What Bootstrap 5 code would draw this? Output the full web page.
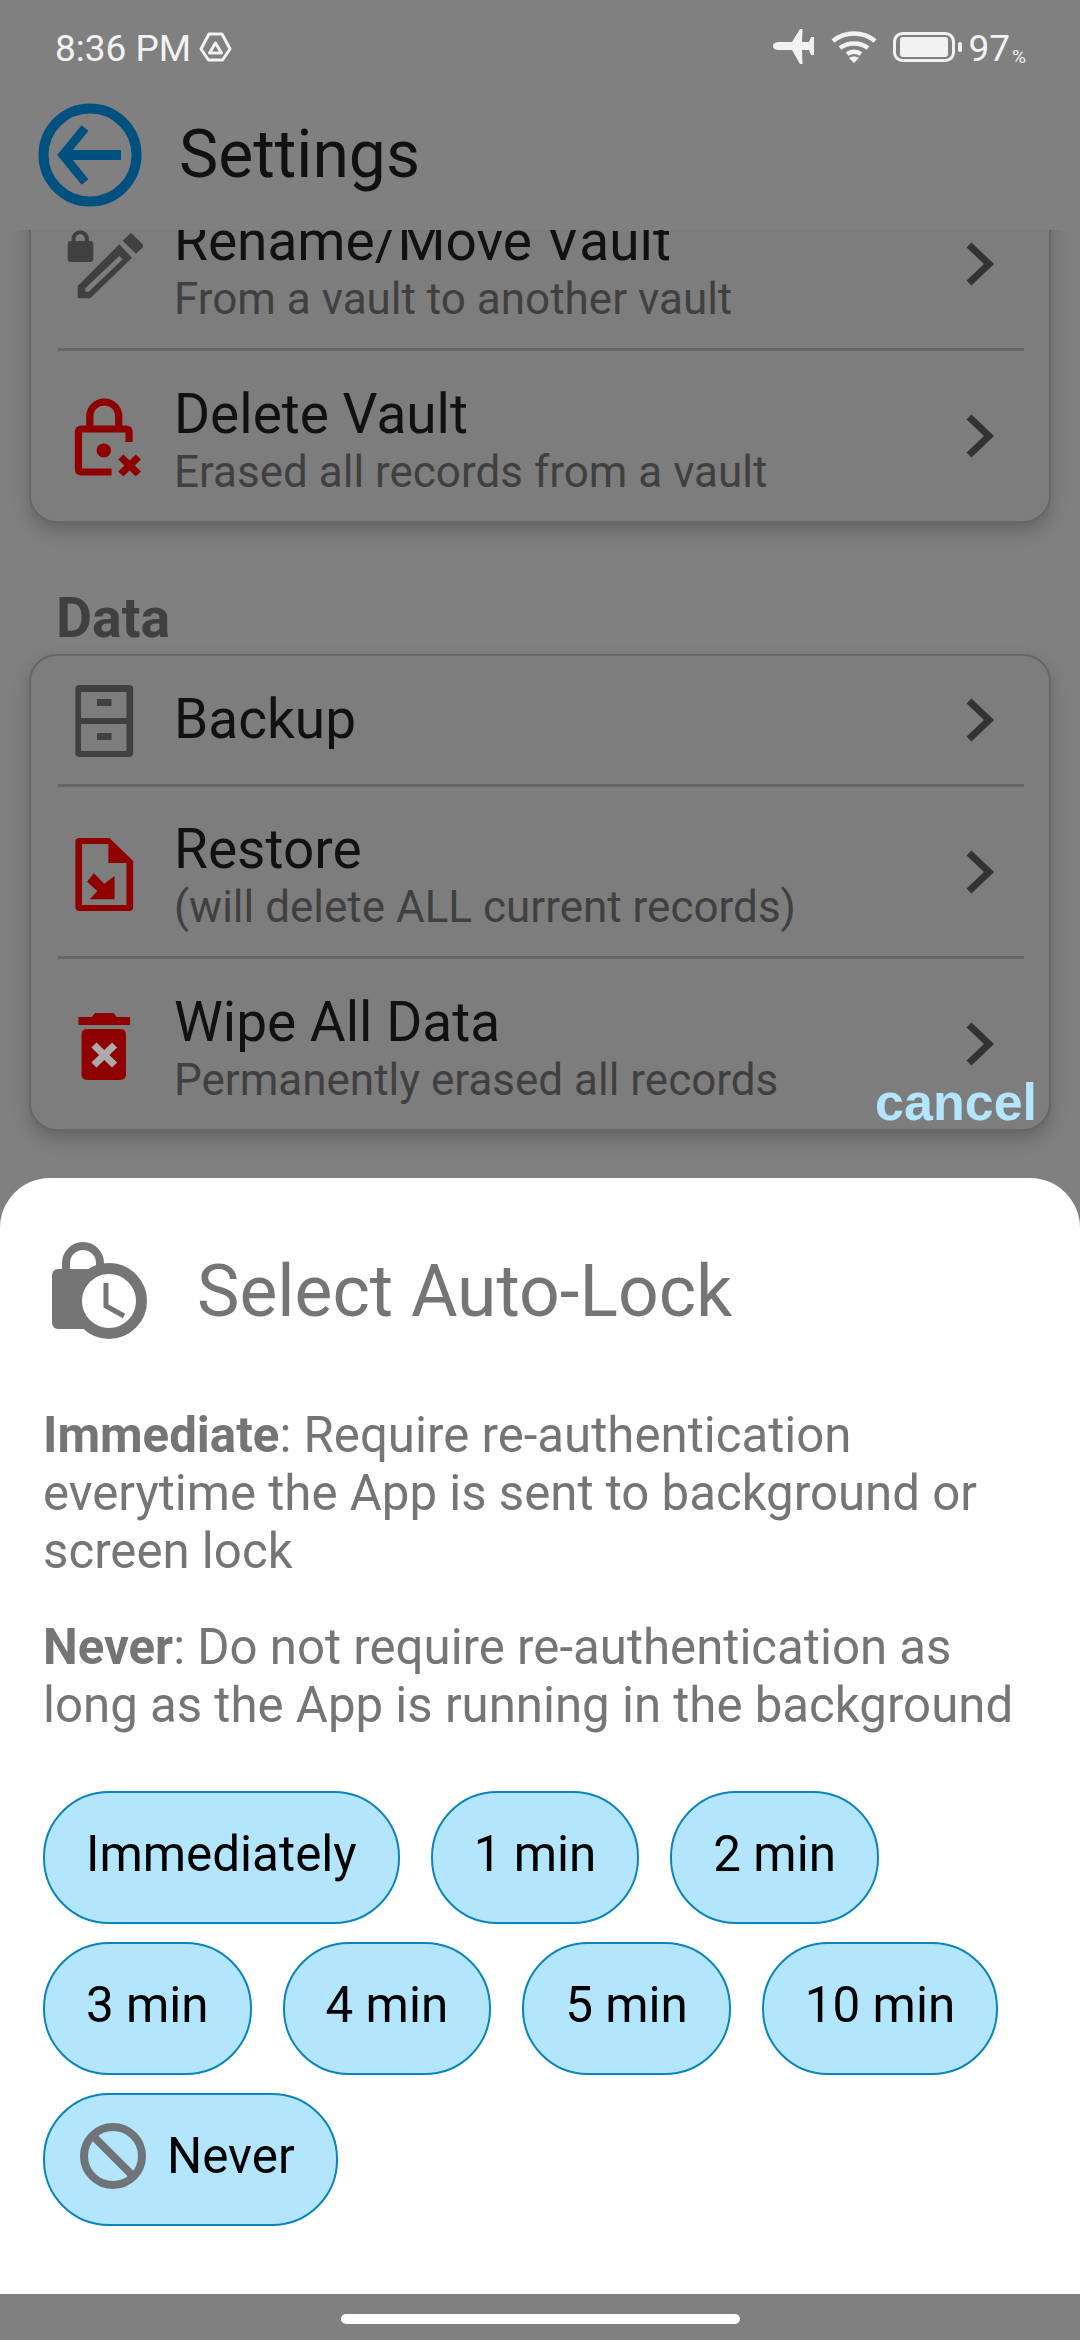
<!DOCTYPE html>
<html lang="en">
<head>
    <meta charset="UTF-8">
    <meta name="viewport" content="width=device-width, initial-scale=1">
    <title>Settings</title>
    <link href="https://cdn.jsdelivr.net/npm/bootstrap@5.3.0/dist/css/bootstrap.min.css" rel="stylesheet">
    <style>
        html, body { margin: 0; height: 2340px; overflow: hidden; }
        body { background: #808080; font-family: Roboto, "Liberation Sans", sans-serif; color: #111; }
        .app-shell { width: 1080px; height: 2340px; }
        .status-line { height: 100px; padding: 27px 54px 0 55px; color: #f2f2f2; font-size: 37px; line-height: 44px; }
        .status-line svg { display: block; margin-bottom: 4px; }
        .pct-num { margin-left: 6px; }
        .pct-sign { font-size: 19px; line-height: 18px; margin-left: 2px; align-self: flex-end; padding-bottom: 5px; }
        .top-bar { height: 130px; padding: 3px 0 24px 38px; background: #808080; position: relative; z-index: 2; }
        .top-title { font-size: 66px; line-height: 82px; margin-left: 37px; }
        .scroll-pane { flex: 1 1 0; min-height: 0; overflow: hidden; position: relative; }
        .scroll-inner { margin-top: -53px; }
        .set-card { margin: 0 29px; background: #7d7d7d; border: 2px solid #666; border-radius: 28px; box-shadow: 0 8px 18px rgba(0,0,0,.22); }
        .set-row { margin: 0 25px 0 27px; height: 172px; border-bottom: 3px solid #666; }
        .set-row.one-line { height: 131px; }
        .set-row:last-child { border-bottom: 0; height: 170px; }
        .row-icon { width: 85px; height: 100px; margin-right: 31px; flex: none; }
        .row-text { padding-top: 11px; }
        .one-line .row-text { padding: 0 0 3px; }
        .row-title { font-size: 55px; line-height: 60px; color: #111; }
        .row-sub { font-size: 44px; line-height: 56px; color: #404040; }
        .row-arrow { width: 30px; height: 44px; margin-right: 29px; flex: none; }
        .group-label { font-size: 55.5px; font-weight: 700; line-height: 60px; color: #404040; margin: 66px 0 5px 56px; }
        .cancel-link { position: absolute; right: 43px; bottom: 46px; font-family: "Liberation Sans", Arial, sans-serif; font-weight: 700; font-size: 52px; line-height: 60px; color: #b3e5fc; }
        .bottom-sheet { background: #fff; border-radius: 50px 50px 0 0; padding: 63px 43px 68px; color: #757575; }
        .sheet-title { font-size: 71.4px; line-height: 102px; margin-left: 47px; color: #757575; }
        .sheet-text { font-size: 49.2px; line-height: 58px; margin: 63px 0 38px; }
        .sheet-text + .sheet-text { margin-top: 0; margin-bottom: 57px; }
        .sheet-text b { font-weight: 700; }
        .time-list { column-gap: 31px; row-gap: 18px; }
        .time-btn { height: 133px; padding: 0 41px 8px; border: 2px solid #0a84bd; border-radius: 66px; background: #b3e5fc; color: #000; font-size: 49.4px; line-height: 58px; }
        .time-btn:hover { background: #b3e5fc; border-color: #0a84bd; color: #000; }
        .never-btn { padding-left: 34px; }
        .never-btn svg { margin-right: 20px; }
        .nav-strip { height: 46px; padding-top: 20px; }
        .home-pill { width: 399px; height: 10px; border-radius: 5px; background: #fff; }
    </style>
</head>
<body>
    <div class="app-shell d-flex flex-column">
        <!-- status bar -->
        <div class="status-line d-flex justify-content-between align-items-start flex-shrink-0">
            <div class="d-flex align-items-center">
                <span>8:36 PM</span>
                <svg class="ms-2" width="34" height="30" viewBox="0 0 34 30" fill="none" stroke="#f2f2f2" stroke-width="3" stroke-linejoin="round"><path d="M10 2h13l8 15-7.500 11h-14L2 17z"/><path d="M16.500 11l6 10h-12z"/></svg>
            </div>
            <div class="d-flex align-items-center">
                <svg width="42" height="36" viewBox="0 0 42 36" fill="#f2f2f2"><path d="M0 17c0-3 3-4 6-4h13L27 0h2.500L29 13h7l2-5h3v18h-3l-2-5h-7l.5 14h-2.500L19 21H6c-3 0-6-1-6-4z"/></svg>
                <svg class="ms-3" width="46" height="32" viewBox="0 0 46 32" fill="none" stroke="#f2f2f2" stroke-width="4.500"><path d="M2 10c12-10 30-10 42 0"/><path d="M9 17c8-6 20-6 28 0"/><path d="M16 23c4-3 10-3 14 0"/><path d="M23 32l-5-5c3-2 7-2 10 0z" fill="#f2f2f2" stroke="none"/></svg>
                <svg class="ms-3" width="69" height="30" viewBox="0 0 69 30" fill="none"><rect x="1.500" y="1.500" width="59" height="27" rx="8" stroke="#f2f2f2" stroke-width="3"/><rect x="7" y="5" width="48" height="20" rx="3" fill="#f2f2f2"/><rect x="65" y="10" width="4" height="10" rx="2" fill="#f2f2f2"/></svg>
                <span class="pct-num">97</span><span class="pct-sign">%</span>
            </div>
        </div>

        <!-- header -->
        <div class="top-bar d-flex align-items-center flex-shrink-0">
            <svg width="104" height="104" viewBox="0 0 104 104" fill="none" stroke="#005080"><circle cx="52" cy="52" r="46.500" stroke-width="10"/><path d="M47 25L25 52l22 27" stroke-width="9"/><path d="M27 52h56" stroke-width="10"/></svg>
            <div class="top-title">Settings</div>
        </div>

        <!-- settings list, scrolled under the header -->
        <div class="scroll-pane">
            <div class="scroll-inner">
                <div class="set-card">
                    <div class="set-row d-flex align-items-center">
                        <svg class="row-icon" viewBox="0 0 85 100" fill="#404040"><rect x="9.700" y="27" width="25.600" height="21" rx="3"/><path d="M15.500 28v-3a6.700 6.700 0 0 1 13.400 0v3" fill="none" stroke="#404040" stroke-width="4"/><path d="M64.700 27l8.300-8.300L86.300 32 78 39.700z"/><path fill-rule="evenodd" d="M61.300 30.300L74 43.700 32.300 84.300H19.700V72zM61.300 42L27.300 74.300v3.400h3.400l34-32.400z"/></svg>
                        <div class="row-text flex-grow-1">
                            <div class="row-title">Rename/Move Vault</div>
                            <div class="row-sub">From a vault to another vault</div>
                        </div>
                        <svg class="row-arrow" viewBox="0 0 30 44" fill="none" stroke="#333" stroke-width="7"><path d="M4 3l20 19L4 41"/></svg>
                    </div>
                    <div class="set-row d-flex align-items-center">
                        <svg class="row-icon" viewBox="-1.800 0 82.300 100" preserveAspectRatio="none" fill="none" stroke="#8f0000" stroke-width="7"><path d="M29 43V30a14 14 0 0 1 28 0v13"/><path d="M67 56V46q0-3-3-3H21q-3 0-3 3v37q0 3 3 3h29"/><circle cx="42.500" cy="64.500" r="7" fill="#8f0000" stroke="none"/><path d="M59 71l17 17M76 71L59 88"/></svg>
                        <div class="row-text flex-grow-1">
                            <div class="row-title">Delete Vault</div>
                            <div class="row-sub">Erased all records from a vault</div>
                        </div>
                        <svg class="row-arrow" viewBox="0 0 30 44" fill="none" stroke="#333" stroke-width="7"><path d="M4 3l20 19L4 41"/></svg>
                    </div>
                </div>

                <div class="group-label">Data</div>

                <div class="set-card">
                    <div class="set-row one-line d-flex align-items-center">
                        <svg class="row-icon" viewBox="-1.800 0 82.300 100" preserveAspectRatio="none"><rect x="15" y="15" width="56" height="72" rx="4" fill="#404040"/><rect x="20.500" y="22" width="44" height="26" fill="#7d7d7d"/><rect x="20.500" y="54" width="44" height="27" fill="#7d7d7d"/><rect x="36" y="29" width="14" height="7" fill="#404040"/><rect x="36" y="63" width="14" height="7" fill="#404040"/></svg>
                        <div class="row-text flex-grow-1">
                            <div class="row-title">Backup</div>
                        </div>
                        <svg class="row-arrow" viewBox="0 0 30 44" fill="none" stroke="#333" stroke-width="7"><path d="M4 3l20 19L4 41"/></svg>
                    </div>
                    <div class="set-row d-flex align-items-center">
                        <svg class="row-icon" viewBox="-1.800 0 82.300 100" preserveAspectRatio="none"><path d="M19 16h29l23 23v46q0 4-4 4H19q-4 0-4-4V20q0-4 4-4z" fill="#8f0000"/><path d="M21.500 22H47v19h17.500v42H21.500z" fill="#7d7d7d"/><path d="M53 54v23.300H29l7.300-8.300-10-9.300L33 51.300l10 10.400z" fill="#8f0000"/></svg>
                        <div class="row-text flex-grow-1">
                            <div class="row-title">Restore</div>
                            <div class="row-sub">(will delete ALL current records)</div>
                        </div>
                        <svg class="row-arrow" viewBox="0 0 30 44" fill="none" stroke="#333" stroke-width="7"><path d="M4 3l20 19L4 41"/></svg>
                    </div>
                    <div class="set-row d-flex align-items-center">
                        <svg class="row-icon" viewBox="-1.800 0 82.300 100" preserveAspectRatio="none"><path d="M18 23h13l3-4h18l3 4h13v8H18z" fill="#8f0000"/><rect x="21" y="35" width="43" height="51" rx="5" fill="#8f0000"/><path d="M33 51l20 20M53 51L33 71" stroke="#ababab" stroke-width="7"/></svg>
                        <div class="row-text flex-grow-1">
                            <div class="row-title">Wipe All Data</div>
                            <div class="row-sub">Permanently erased all records</div>
                        </div>
                        <svg class="row-arrow" viewBox="0 0 30 44" fill="none" stroke="#333" stroke-width="7"><path d="M4 3l20 19L4 41"/></svg>
                    </div>
                </div>
            </div>
            <span class="cancel-link">cancel</span>
        </div>

        <!-- auto-lock sheet -->
        <div class="bottom-sheet flex-shrink-0">
            <div class="d-flex align-items-center">
                <svg width="107" height="100" viewBox="-7 0 107 100" class="flex-shrink-0"><rect x="2" y="27" width="60" height="60" rx="6" fill="#757575"/><path d="M16 30V21a17 17 0 0 1 34 0v9" fill="none" stroke="#757575" stroke-width="8"/><circle cx="59" cy="59" r="32.500" fill="#fff" stroke="#757575" stroke-width="11"/><path d="M56 41v23l18 10" fill="none" stroke="#757575" stroke-width="5"/></svg>
                <div class="sheet-title">Select Auto-Lock</div>
            </div>
            <p class="sheet-text"><b>Immediate</b>: Require re-authentication everytime the App is sent to background or screen lock</p>
            <p class="sheet-text"><b>Never</b>: Do not require re-authentication as long as the App is running in the background</p>
            <div class="time-list d-flex flex-wrap">
                <button type="button" class="btn time-btn">Immediately</button>
                <button type="button" class="btn time-btn">1 min</button>
                <button type="button" class="btn time-btn">2 min</button>
                <button type="button" class="btn time-btn">3 min</button>
                <button type="button" class="btn time-btn">4 min</button>
                <button type="button" class="btn time-btn">5 min</button>
                <button type="button" class="btn time-btn">10 min</button>
                <button type="button" class="btn time-btn never-btn d-flex align-items-center">
                    <svg width="68" height="68" viewBox="0 0 68 68" fill="none" stroke="#6f7478" stroke-width="8"><circle cx="34" cy="34" r="29"/><path d="M14 14l40 40"/></svg>
                    <span>Never</span>
                </button>
            </div>
        </div>

        <div class="nav-strip flex-shrink-0 d-flex justify-content-center">
            <div class="home-pill"></div>
        </div>
    </div>

    <script src="https://cdn.jsdelivr.net/npm/bootstrap@5.3.0/dist/js/bootstrap.bundle.min.js"></script>
</body>
</html>
